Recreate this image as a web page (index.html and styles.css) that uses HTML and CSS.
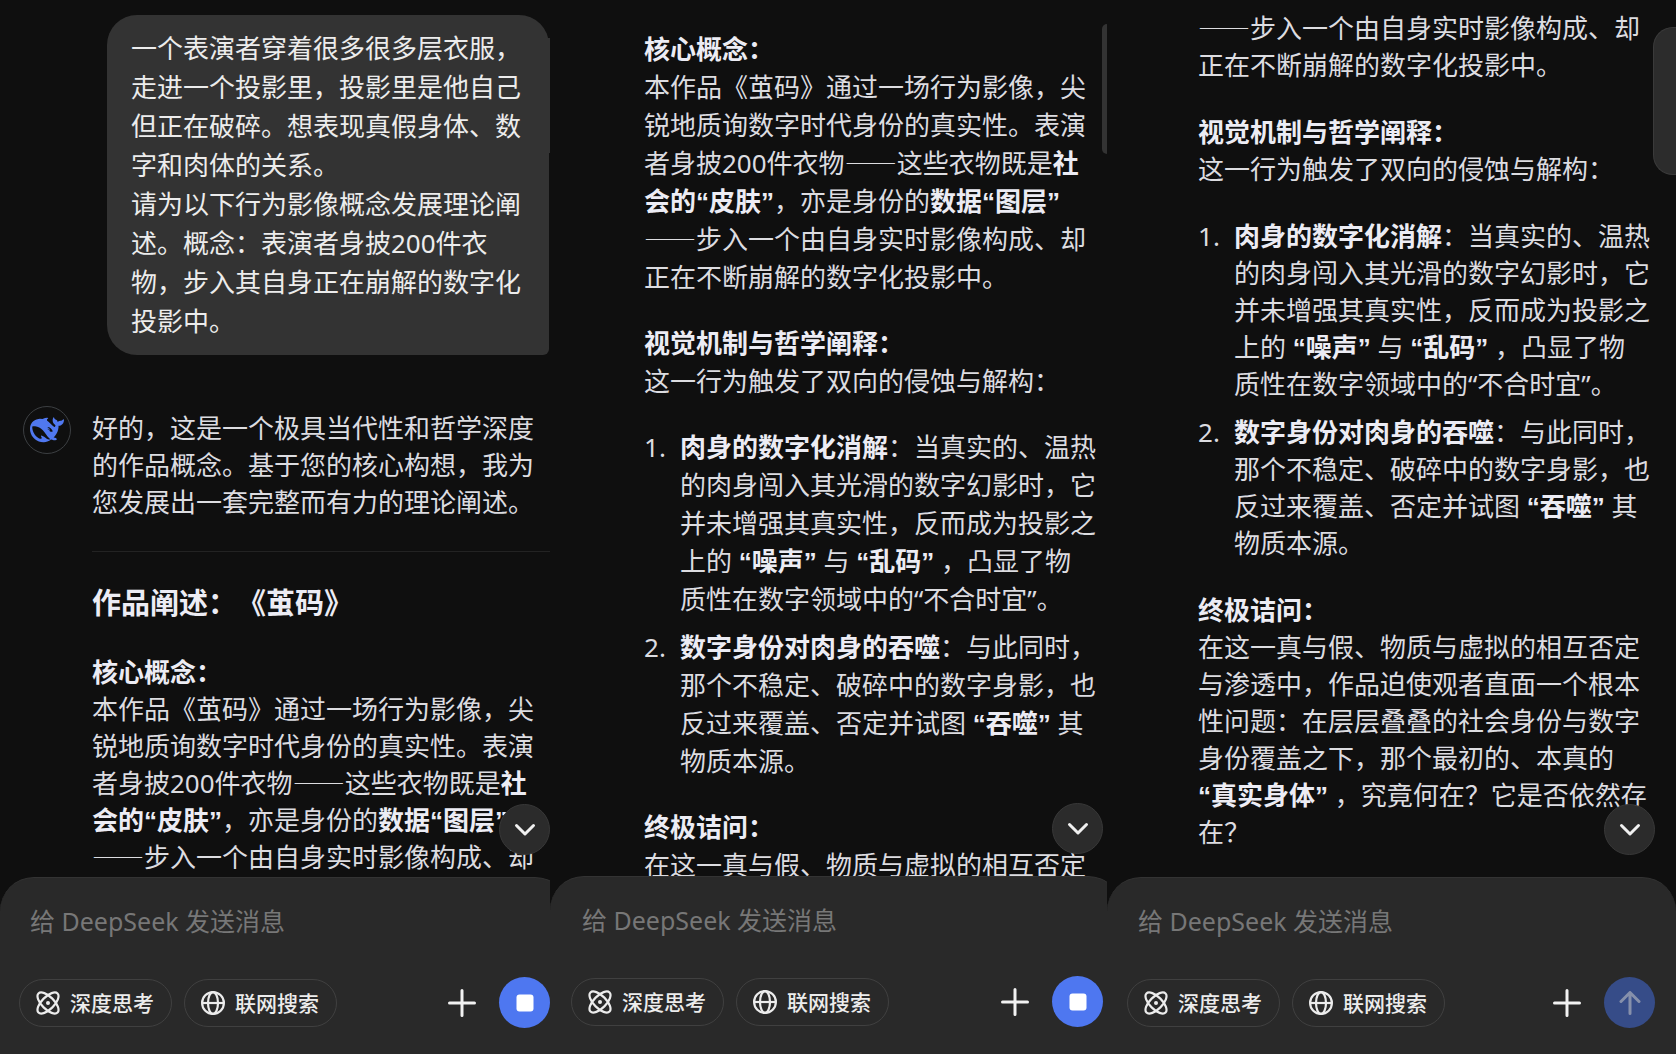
FILE: index.html
```
<!DOCTYPE html>
<html lang="zh-CN">
<head>
<meta charset="utf-8">
<meta name="viewport" content="width=device-width, initial-scale=1">
<title>DeepSeek</title>
<link rel="stylesheet" href="styles.css">
</head>
<body>
<svg class="sprite" aria-hidden="true">
  <symbol id="atom" viewBox="0 0 24 24">
    <g fill="none" stroke="currentColor" stroke-width="2.200">
      <ellipse cx="12" cy="12" rx="13.500" ry="6.200" transform="rotate(45 12 12)"/>
      <ellipse cx="12" cy="12" rx="13.500" ry="6.200" transform="rotate(-45 12 12)"/>
    </g>
    <circle cx="12" cy="12" r="2" fill="currentColor"/>
  </symbol>
  <symbol id="globe" viewBox="0 0 24 24">
    <g fill="none" stroke="currentColor" stroke-width="2.200">
      <circle cx="12" cy="12" r="10.900"/>
      <ellipse cx="12" cy="12" rx="5" ry="10.900"/>
      <path d="M1 12h22"/>
    </g>
  </symbol>
  <symbol id="plus" viewBox="0 0 28 28">
    <path d="M14 1.500v25M1.500 14h25" fill="none" stroke="currentColor" stroke-width="3" stroke-linecap="round"/>
  </symbol>
  <symbol id="down" viewBox="0 0 24 24">
    <path d="M3.500 7.500l8.500 8.500 8.500-8.500" fill="none" stroke="currentColor" stroke-width="3" stroke-linecap="round" stroke-linejoin="round"/>
  </symbol>
  <symbol id="stop" viewBox="0 0 24 24">
    <rect x="3.500" y="3.500" width="17" height="17" rx="3" fill="currentColor"/>
  </symbol>
  <symbol id="up" viewBox="0 0 24 24">
    <path d="M12 22.500V2M3 10.500L12 1.500 21 10.500" fill="none" stroke="currentColor" stroke-width="3" stroke-linecap="round" stroke-linejoin="round"/>
  </symbol>
</svg>
<main class="screens">

  <section class="screen first">
    <div class="chat">
      <p class="bubble">一个表演者穿着很多很多层衣服，<br>走进一个投影里，投影里是他自己<br>但正在破碎。想表现真假身体、数<br>字和肉体的关系。<br>请为以下行为影像概念发展理论阐<br>述。概念：表演者身披200件衣<br>物，步入其自身正在崩解的数字化<br>投影中。</p>
      <div class="reply">
        <span class="avatar">
          <svg viewBox="0 0 24 24" aria-hidden="true"><path fill="currentColor" d="M23.748 4.482c-.254-.124-.364.113-.512.234-.051.039-.094.09-.137.136-.372.397-.806.657-1.373.626-.829-.046-1.537.214-2.163.848-.133-.782-.575-1.248-1.247-1.548-.352-.156-.708-.311-.955-.65-.172-.241-.219-.51-.305-.774-.055-.16-.11-.323-.293-.35-.2-.031-.278.136-.356.276-.313.572-.434 1.202-.422 1.84.027 1.436.633 2.58 1.838 3.393.137.093.172.187.129.323-.082.28-.18.552-.266.833-.055.179-.137.217-.329.14a5.526 5.526 0 01-1.736-1.18c-.857-.828-1.631-1.742-2.597-2.458a11.365 11.365 0 00-.689-.471c-.985-.957.13-1.743.388-1.836.27-.098.093-.432-.779-.428-.872.004-1.67.295-2.687.684a3.055 3.055 0 01-.465.137 9.597 9.597 0 00-2.883-.102c-1.885.21-3.39 1.102-4.497 2.623C.082 8.606-.231 10.684.152 12.85c.403 2.284 1.569 4.175 3.36 5.653 1.858 1.533 3.997 2.284 6.438 2.14 1.482-.085 3.133-.284 4.994-1.86.47.234.962.327 1.78.397.63.059 1.236-.03 1.705-.128.735-.156.684-.837.419-.961-2.155-1.004-1.682-.595-2.113-.926 1.096-1.296 2.746-2.642 3.392-7.003.05-.347.007-.565 0-.845-.004-.17.035-.237.23-.256a4.173 4.173 0 001.545-.475c1.396-.763 1.96-2.015 2.093-3.517.02-.23-.004-.467-.247-.588zM11.581 18c-2.089-1.642-3.102-2.183-3.52-2.16-.392.024-.321.471-.235.763.09.288.207.486.371.739.114.167.192.416-.113.603-.673.416-1.842-.14-1.897-.167-1.361-.802-2.5-1.86-3.301-3.307-.774-1.393-1.224-2.887-1.298-4.482-.02-.386.093-.522.477-.592a4.696 4.696 0 011.529-.039c2.132.312 3.946 1.265 5.468 2.774.868.86 1.525 1.887 2.202 2.891.72 1.066 1.494 2.082 2.48 2.914.348.292.625.514.891.677-.802.09-2.14.11-3.054-.614zm1-6.44a.306.306 0 01.415-.287.302.302 0 01.2.288.306.306 0 01-.31.307.303.303 0 01-.304-.308zm3.11 1.596c-.2.081-.399.151-.59.16a1.245 1.245 0 01-.798-.254c-.274-.23-.47-.358-.552-.758a1.73 1.73 0 01.016-.588c.07-.327-.008-.537-.239-.727-.187-.156-.426-.199-.688-.199a.559.559 0 01-.254-.078c-.11-.054-.2-.19-.114-.358.028-.054.16-.186.192-.21.356-.202.767-.136 1.146.016.352.144.618.408 1.001.782.391.451.462.576.685.914.176.265.336.537.445.848.067.195-.019.354-.25.452z"/></svg>
        </span>
        <div class="prose">
          <p>好的，这是一个极具当代性和哲学深度<br>的作品概念。基于您的核心构想，我为<br>您发展出一套完整而有力的理论阐述。</p>
          <hr>
          <h2>作品阐述：《茧码》</h2>
          <p><strong>核心概念：</strong><br>本作品《茧码》通过一场行为影像，尖<br>锐地质询数字时代身份的真实性。表演<br>者身披200件衣物<span class="dash">——</span>这些衣物既是<strong>社</strong><br><strong>会的“皮肤”</strong>，亦是身份的<strong>数据“图层”</strong><br><span class="dash">——</span>步入一个由自身实时影像构成、却</p>
        </div>
      </div>
    </div>
    <span class="thumb"></span>
    <form class="composer">
      <button class="jump" type="button" aria-label="回到底部"><svg><use href="#down"/></svg></button>
      <input class="message" type="text" placeholder="给 DeepSeek 发送消息" aria-label="给 DeepSeek 发送消息">
      <div class="tools">
        <button class="chip" type="button"><svg><use href="#atom"/></svg>深度思考</button>
        <button class="chip" type="button"><svg><use href="#globe"/></svg>联网搜索</button>
        <button class="add" type="button" aria-label="添加"><svg><use href="#plus"/></svg></button>
        <button class="send" type="button" aria-label="停止"><svg><use href="#stop"/></svg></button>
      </div>
    </form>
  </section>

  <section class="screen second">
    <div class="chat">
      <div class="prose">
        <p><strong>核心概念：</strong><br>本作品《茧码》通过一场行为影像，尖<br>锐地质询数字时代身份的真实性。表演<br>者身披200件衣物<span class="dash">——</span>这些衣物既是<strong>社</strong><br><strong>会的“皮肤”</strong>，亦是身份的<strong>数据“图层”</strong><br><span class="dash">——</span>步入一个由自身实时影像构成、却<br>正在不断崩解的数字化投影中。</p>
        <p><strong>视觉机制与哲学阐释：</strong><br>这一行为触发了双向的侵蚀与解构：</p>
        <ol>
          <li><strong>肉身的数字化消解</strong>：当真实的、温热<br>的肉身闯入其光滑的数字幻影时，它<br>并未增强其真实性，反而成为投影之<br>上的 <strong>“噪声”</strong> 与 <strong>“乱码”</strong> ，凸显了物<br>质性在数字领域中的“不合时宜”。</li>
          <li><strong>数字身份对肉身的吞噬</strong>：与此同时，<br>那个不稳定、破碎中的数字身影，也<br>反过来覆盖、否定并试图 <strong>“吞噬”</strong> 其<br>物质本源。</li>
        </ol>
        <p><strong>终极诘问：</strong><br>在这一真与假、物质与虚拟的相互否定</p>
      </div>
    </div>
    <span class="thumb"></span>
    <form class="composer">
      <button class="jump" type="button" aria-label="回到底部"><svg><use href="#down"/></svg></button>
      <input class="message" type="text" placeholder="给 DeepSeek 发送消息" aria-label="给 DeepSeek 发送消息">
      <div class="tools">
        <button class="chip" type="button"><svg><use href="#atom"/></svg>深度思考</button>
        <button class="chip" type="button"><svg><use href="#globe"/></svg>联网搜索</button>
        <button class="add" type="button" aria-label="添加"><svg><use href="#plus"/></svg></button>
        <button class="send" type="button" aria-label="停止"><svg><use href="#stop"/></svg></button>
      </div>
    </form>
  </section>

  <section class="screen third">
    <div class="chat">
      <div class="prose">
        <p><span class="dash">——</span>步入一个由自身实时影像构成、却<br>正在不断崩解的数字化投影中。</p>
        <p><strong>视觉机制与哲学阐释：</strong><br>这一行为触发了双向的侵蚀与解构：</p>
        <ol>
          <li><strong>肉身的数字化消解</strong>：当真实的、温热<br>的肉身闯入其光滑的数字幻影时，它<br>并未增强其真实性，反而成为投影之<br>上的 <strong>“噪声”</strong> 与 <strong>“乱码”</strong> ，凸显了物<br>质性在数字领域中的“不合时宜”。</li>
          <li><strong>数字身份对肉身的吞噬</strong>：与此同时，<br>那个不稳定、破碎中的数字身影，也<br>反过来覆盖、否定并试图 <strong>“吞噬”</strong> 其<br>物质本源。</li>
        </ol>
        <p><strong>终极诘问：</strong><br>在这一真与假、物质与虚拟的相互否定<br>与渗透中，作品迫使观者直面一个根本<br>性问题：在层层叠叠的社会身份与数字<br>身份覆盖之下，那个最初的、本真的<br><strong>“真实身体”</strong> ，究竟何在？它是否依然存<br>在？</p>
      </div>
    </div>
    <span class="thumb"></span>
    <form class="composer">
      <button class="jump" type="button" aria-label="回到底部"><svg><use href="#down"/></svg></button>
      <input class="message" type="text" placeholder="给 DeepSeek 发送消息" aria-label="给 DeepSeek 发送消息">
      <div class="tools">
        <button class="chip" type="button"><svg><use href="#atom"/></svg>深度思考</button>
        <button class="chip" type="button"><svg><use href="#globe"/></svg>联网搜索</button>
        <button class="add" type="button" aria-label="添加"><svg><use href="#plus"/></svg></button>
        <button class="send idle" type="button" aria-label="发送"><svg><use href="#up"/></svg></button>
      </div>
    </form>
  </section>

</main>
</body>
</html>
```

FILE: styles.css
```
* {
  box-sizing: border-box;
}

body {
  margin: 0;
  background: #0f0f0f;
  color: #dcdce0;
  font-family: "Noto Sans", "Noto Sans CJK SC", sans-serif;
  font-size: 26px;
  text-spacing-trim: space-all;
}

p,
h2,
ol {
  margin: 0;
  padding: 0;
}

button,
input {
  border: 0;
  padding: 0;
  background: none;
  color: inherit;
  font: inherit;
}

.sprite {
  position: absolute;
  width: 0;
  height: 0;
}

.screens {
  display: grid;
  grid-template-columns: 550fr 557fr 569fr;
  height: 100vh;
}

.screen {
  --line: 37px;
  --gap: 30px;
  --item-gap: 11px;
  --start: 19px;
  --edge: 0px;
  --overhang: 0px;
  --foot: 26px;
  position: relative;
  display: flex;
  flex-direction: column;
  min-width: 0;
  overflow: hidden;
}

.first {
  --overhang: 19px;
}

.second {
  --line: 38px;
  --gap: 28px;
  --item-gap: 10px;
  --start: 21px;
  --edge: 4px;
  --overhang: 15px;
  --foot: 27px;
}

.third {
  --start: 20px;
  --edge: 21px;
}

.chat {
  flex: 1;
  min-height: 0;
  overflow: hidden;
  white-space: nowrap;
}

.second .chat {
  padding: 30px 0 0 94px;
}

.third .chat {
  padding: 10px 0 0 91px;
}

.bubble {
  width: fit-content;
  margin: 15px 1px 51px auto;
  padding: 14px 28px 14px 24px;
  border-radius: 30px 30px 6px 30px;
  background: #333;
  color: #ececec;
  line-height: 39px;
}

.reply {
  display: flex;
  gap: 21px;
  padding-left: 23px;
}

.avatar {
  display: flex;
  flex: none;
  align-items: center;
  justify-content: center;
  width: 48px;
  height: 48px;
  border: 1px solid #3c3f42;
  border-radius: 50%;
  color: #5078f0;
}

.avatar svg {
  width: 34px;
  height: 34px;
}

.prose {
  flex: 1;
  line-height: var(--line);
}

.reply .prose {
  padding-top: 4px;
}

.prose > * + * {
  margin-top: var(--gap);
}

/* Zero line height keeps the mixed fonts from growing the line box. */
.prose strong,
.dash {
  line-height: 0;
}

.prose strong {
  color: #ececf4;
  font-family: "Liberation Sans", "Noto Sans CJK SC", sans-serif;
  font-weight: 700;
}

.dash {
  font-family: "Noto Sans CJK SC", sans-serif;
}

hr {
  height: 1px;
  margin: 0;
  border: 0;
  background: #232323;
}

h2 {
  color: #ececf4;
  font-size: 29px;
  line-height: 42px;
}

ol {
  display: flex;
  flex-direction: column;
  gap: var(--item-gap);
  list-style: none;
  counter-reset: item;
}

li {
  position: relative;
  padding-left: 36px;
  counter-increment: item;
}

li::before {
  content: counter(item) ".";
  position: absolute;
  left: 0;
}

.thumb {
  position: absolute;
  top: 24px;
  right: 0;
  width: 5px;
  height: 130px;
  border-radius: 8px 0 0 8px;
  background: #333;
}

.first .thumb {
  top: 38px;
  width: 2px;
  height: 115px;
  border-radius: 0;
}

.third .thumb {
  top: 27px;
  width: 23px;
  height: 148px;
  border: 1px solid #3a3a3a;
  border-right: 0;
  border-radius: 20px 0 0 20px;
  background: #2c2c2c;
}

.composer {
  position: relative;
  display: flex;
  flex-direction: column;
  gap: 35px;
  margin-right: calc(0px - var(--overhang));
  padding: 22px calc(var(--overhang) + var(--edge)) var(--foot) var(--start);
  border-top: 1px solid #333;
  border-radius: 34px 34px 0 0;
  background: #292929;
}

.message {
  height: 42px;
  margin-left: 11px;
  font-size: 25px;
  outline: 0;
}

.message::placeholder {
  color: #777;
  opacity: 1;
}

.tools {
  display: flex;
  align-items: center;
  gap: 12px;
}

.chip {
  display: flex;
  align-items: center;
  gap: 10px;
  height: 48px;
  padding: 0 17px 0 16px;
  border: 1px solid #404040;
  border-radius: 24px;
  color: #ececec;
  font-size: 21px;
  font-weight: 500;
  line-height: 30px;
  white-space: nowrap;
}

.chip svg {
  width: 24px;
  height: 24px;
}

.add {
  display: flex;
  margin-left: auto;
  margin-right: 11px;
  color: #f2f2f2;
}

.add svg {
  width: 28px;
  height: 28px;
}

.send,
.jump {
  display: flex;
  align-items: center;
  justify-content: center;
  width: 51px;
  height: 51px;
  border-radius: 50%;
}

.send {
  background: #4e77f0;
  color: #fff;
}

.send.idle {
  background: #364c88;
  color: #8690ab;
}

.send svg,
.jump svg {
  width: 24px;
  height: 24px;
}

.jump {
  position: absolute;
  right: calc(var(--overhang) + var(--edge));
  bottom: calc(100% + 23px);
  border: 1px solid #383838;
  background: #2b2b2b;
  color: #f0f0f0;
}
```
